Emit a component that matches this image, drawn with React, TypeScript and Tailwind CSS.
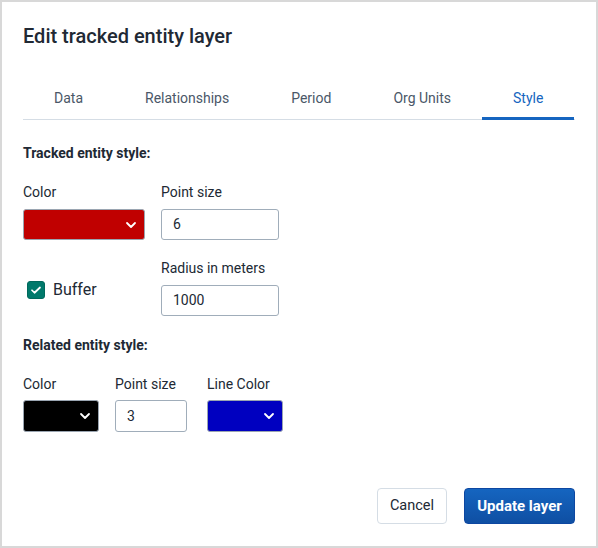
import React from 'react'

const tabs = ['Data', 'Relationships', 'Period', 'Org Units', 'Style']

const Chevron = () => (
    <svg width="12" height="12" viewBox="0 0 24 24" fill="none" stroke="white" strokeWidth="3.6" strokeLinecap="round" strokeLinejoin="round">
        <path d="M4 8l8 8 8-8" />
    </svg>
)

const ColorSelect = ({ color, width }: { color: string; width: string }) => (
    <div className={`${width} h-[31px] rounded-[3px] border border-[#9aa5b1] flex items-center justify-end pr-[7px] ${color}`}>
        <Chevron />
    </div>
)

const NumInput = ({ value, width, height }: { value: string; width: string; height: string }) => (
    <div className={`${width} ${height} rounded-[3px] border border-[#a0adba] bg-white flex items-center pl-[11px] text-[14px] text-[#212934]`}>
        {value}
    </div>
)

const Label = ({ children }: { children: React.ReactNode }) => (
    <div className="text-[14px] leading-[20px] text-[#212934]">{children}</div>
)

const App = () => {
    return (
        <div
            className="w-[598px] h-[548px] border-2 border-[#d8d8d8] bg-white flex flex-col"
            style={{ fontFamily: 'Roboto, "Noto Sans", sans-serif' }}
        >
            <div className="px-[21px] pt-[20px]">
                <h1 className="text-[20px] leading-[28px] font-medium text-[#212934]">
                    Edit tracked entity layer
                </h1>

                <div className="mt-[28px] flex h-[42px] border-b border-[#d5dde5]">
                    {tabs.map(t => (
                        <div
                            key={t}
                            className={`relative px-[31px] flex items-center text-[14px] ${t === 'Style' ? 'text-[#1565c0]' : 'text-[#4a5768]'}`}
                        >
                            {t}
                            {t === 'Style' && (
                                <span className="absolute left-0 right-0 bottom-[-1px] h-[3px] bg-[#1565c0]" />
                            )}
                        </div>
                    ))}
                </div>

                <div className="mt-[23px] text-[14px] leading-[20px] font-bold text-[#212934]">
                    Tracked entity style:
                </div>

                <div className="mt-[19px] flex gap-[16px]">
                    <div className="flex flex-col gap-[7px]">
                        <Label>Color</Label>
                        <ColorSelect color="bg-[#c00000]" width="w-[122px]" />
                    </div>
                    <div className="flex flex-col gap-[7px]">
                        <Label>Point size</Label>
                        <NumInput value="6" width="w-[118px]" height="h-[31px]" />
                    </div>
                </div>

                <div className="mt-[18px] flex gap-[16px]">
                    <div className="w-[122px] flex items-end pb-[14px]">
                        <div className="flex items-center gap-[8px] pl-[4px] h-[24px]">
                            <div className="w-[18px] h-[18px] rounded-[3px] bg-[#00796b] border border-[#00695c] flex items-center justify-center">
                                <svg width="12" height="12" viewBox="0 0 24 24" fill="none" stroke="white" strokeWidth="3.5" strokeLinecap="round" strokeLinejoin="round">
                                    <path d="M4 12.5l5 5L20 7" />
                                </svg>
                            </div>
                            <span className="text-[16px] text-[#212934]">Buffer</span>
                        </div>
                    </div>
                    <div className="flex flex-col gap-[7px]">
                        <Label>Radius in meters</Label>
                        <NumInput value="1000" width="w-[118px]" height="h-[31px]" />
                    </div>
                </div>

                <div className="mt-[19px] text-[14px] leading-[20px] font-bold text-[#212934]">
                    Related entity style:
                </div>

                <div className="mt-[19px] flex">
                    <div className="flex flex-col gap-[6px]">
                        <Label>Color</Label>
                        <ColorSelect color="bg-black h-[32px]" width="w-[76px]" />
                    </div>
                    <div className="ml-[16px] flex flex-col gap-[6px]">
                        <Label>Point size</Label>
                        <NumInput value="3" width="w-[72px]" height="h-[32px]" />
                    </div>
                    <div className="ml-[20px] flex flex-col gap-[6px]">
                        <Label>Line Color</Label>
                        <ColorSelect color="bg-[#0000c0] h-[32px]" width="w-[76px]" />
                    </div>
                </div>
            </div>

            <div className="mt-auto flex justify-end gap-[17px] px-[21px] pb-[22px]">
                <button className="h-[36px] w-[70px] rounded-[4px] border border-[#d5dde5] bg-white text-[14.5px] text-[#212934]">
                    Cancel
                </button>
                <button className="h-[36px] w-[111px] rounded-[4px] border border-[#0d47a1] bg-gradient-to-b from-[#1565c0] to-[#0f4fa3] text-[15px] font-bold text-white">
                    Update layer
                </button>
            </div>
        </div>
    )
}

export default App
